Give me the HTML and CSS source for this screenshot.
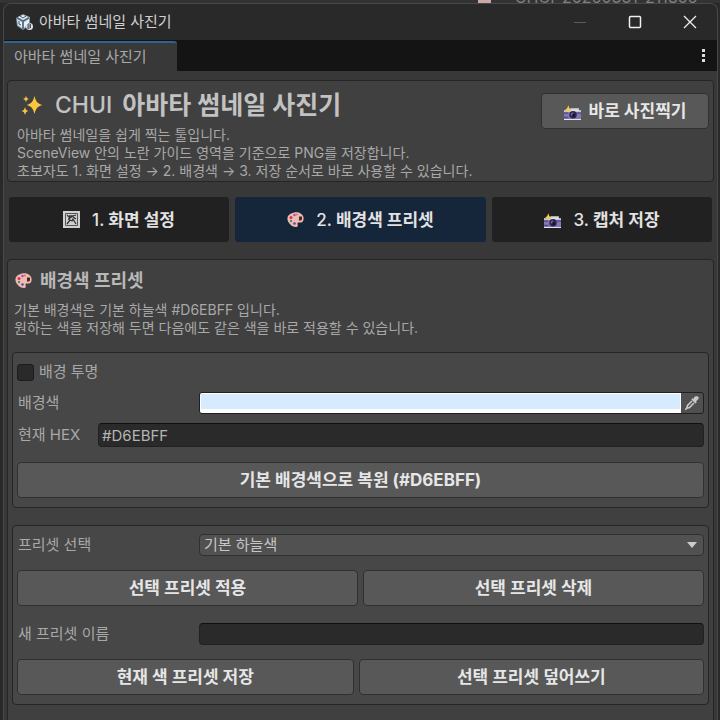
FILE: index.html
```html
<!DOCTYPE html>
<html lang="ko">
<head>
<meta charset="utf-8">
<title>아바타 썸네일 사진기</title>
<link rel="stylesheet" href="styles.css">
</head>
<body>
<svg class="defs" width="0" height="0" aria-hidden="true">
  <symbol id="camera" viewBox="0 0 16 16">
    <path fill="#d8d8e0" d="M6 5h8v2h2v2H0V7h6z"/>
    <path fill="#8078b4" d="M0 8h16v7H0z"/>
    <path fill="#e4e4ea" d="M0 7h16v1H0zM0 15h16v1H0z"/>
    <path fill="#544a8a" d="M0 9h4v1H0zM12 9h4v1h-4zM0 13h4v1H0z"/>
    <circle cx="8.500" cy="11" r="3.500" fill="#30254e"/>
    <circle cx="8" cy="10.500" r="1.500" fill="#6e62a4"/>
    <path fill="#120e22" d="M8 10h2v3H8z"/>
    <path fill="#f8cf48" d="M4 2l1 3 2 1-2 1-1 2-1-2-2-1 2-1z"/>
  </symbol>
  <symbol id="palette" viewBox="0 0 17 16">
    <path fill="#f3b9ad" d="M7 1C11 0 16 2 16.500 6c.5 3-1 5-3 5-1.500 0-3-.5-3 1 0 1 1 3-1 3.500C6 16 1 12 .5 8 0 4 3 2 7 1z"/>
    <path fill="#3c2d30" d="M12 5h3v3l-1 1h-2z"/>
    <circle cx="7.500" cy="3.500" r="1.200" fill="#7c55c8"/>
    <circle cx="4" cy="6" r="1.500" fill="#d82c62"/>
    <circle cx="4" cy="9.500" r="1.200" fill="#3b9c64"/>
    <circle cx="7.500" cy="12" r="1.300" fill="#464bd0"/>
    <circle cx="10" cy="3" r="1" fill="#dc6f72"/>
  </symbol>
</svg>
<div class="behind" aria-hidden="true"><i class="thumb"></i><span>CHUI_20260331_211856_</span></div>
<div class="window">
  <header class="titlebar">
    <svg class="app-icon" viewBox="0 0 18 18" aria-hidden="true">
      <path fill="#8299ac" d="M8 1l7 3v8l-7 5-6-4-1-8z"/>
      <path fill="#e6edf3" d="M8 2l5 2-5 3-5-3zM2 6l5 3v6l-4-3zM9 9l5-3v4l-5 5z"/>
      <path fill="none" stroke="#40566a" d="M2 5l6 3 6-3M8 8v8M5 3l3 2 3-2M4 8v3l2 1"/>
      <circle cx="14.500" cy="13.500" r="3.500" fill="#dce2e7"/>
      <path fill="none" stroke="#44525f" d="M13 16v-5h2l1 1-1 1h-2m2 0l1 1-1 1h-2"/>
    </svg>
    <h1 class="window-title">아바타 썸네일 사진기</h1>
    <button class="win-btn" aria-label="최소화" disabled><svg viewBox="0 0 14 14"><path d="M1 7.500h12" stroke="#5c5c5c"/></svg></button>
    <button class="win-btn" aria-label="최대화"><svg viewBox="0 0 14 14"><rect x="1.500" y="1.500" width="11" height="11" rx="1" stroke="#f0f0f0" stroke-width="1.500"/></svg></button>
    <button class="win-btn" aria-label="닫기"><svg viewBox="0 0 14 14"><path d="M1 1l12 12M13 1L1 13" stroke="#f0f0f0" stroke-width="1.300"/></svg></button>
  </header>
  <div class="dock">
    <a class="dock-tab" href="#main">아바타 썸네일 사진기</a>
    <button class="more" aria-label="메뉴"><svg viewBox="0 0 3 13"><path fill="#ddd" d="M0 0h3v3H0zM0 5h3v3H0zM0 10h3v3H0z"/></svg></button>
  </div>
  <main class="content" id="main">
    <section class="intro">
      <div class="intro-text">
        <h2 class="intro-title"><svg class="sparkle" viewBox="0 0 22 22" aria-hidden="true"><path fill="#fbc63f" d="M13.500 2c1.500 6 3 7.500 8 9-5 1.500-6.500 3-8 9-1.500-6-3-7.500-8-9 5-1.500 6.500-3 8-9zM5 1.500c.5 2.500 1 3 3 3.500-2 .5-2.500 1-3 3.500C4.500 6 4 5.500 2 5c2-.5 2.500-1 3-3.500zM4 13c.6 2.500 1.200 3.200 3.500 4-2.300.8-2.900 1.500-3.500 4-.6-2.500-1.200-3.200-3.500-4 2.300-.8 2.900-1.500 3.500-4z"/></svg><span class="latin">CHUI</span> 아바타 썸네일 사진기</h2>
        <p class="desc">아바타 썸네일을 쉽게 찍는 툴입니다.<br>SceneView 안의 노란 가이드 영역을 기준으로 PNG를 저장합니다.<br>초보자도 1. 화면 설정 → 2. 배경색 → 3. 저장 순서로 바로 사용할 수 있습니다.</p>
      </div>
      <button class="btn shoot"><svg class="emoji" aria-hidden="true"><use href="#camera"/></svg>바로 사진찍기</button>
    </section>
    <nav class="steps">
      <button class="step"><svg class="emoji" viewBox="0 0 17 17" aria-hidden="true"><path fill="#d0d0d0" d="M0 0h17v17H0z"/><path fill="none" stroke="#555" d="M2.500 2.500h12v12h-12z"/><path fill="none" stroke="#333" stroke-width="1.300" d="M4 4l3 3 3-2 3-1M4 13l3-4 2 1 1-2 3 5M6 5h4M5 8h2M10 6l3 2"/></svg><span class="step-label"><span class="latin">1.</span> 화면 설정</span></button>
      <button class="step active"><svg class="emoji" aria-hidden="true"><use href="#palette"/></svg><span class="step-label"><span class="latin">2.</span> 배경색 프리셋</span></button>
      <button class="step"><svg class="emoji" aria-hidden="true"><use href="#camera"/></svg><span class="step-label"><span class="latin">3.</span> 캡처 저장</span></button>
    </nav>
    <section class="panel">
      <h2 class="panel-title"><svg class="emoji" aria-hidden="true"><use href="#palette"/></svg>배경색 프리셋</h2>
      <p class="desc">기본 배경색은 기본 하늘색 #D6EBFF 입니다.<br>원하는 색을 저장해 두면 다음에도 같은 색을 바로 적용할 수 있습니다.</p>
      <div class="group">
        <div class="row"><input class="check" type="checkbox" id="transparent"><label for="transparent">배경 투명</label></div>
        <div class="row">
          <label class="name" for="color">배경색</label>
          <div class="color-field"><input type="color" id="color" value="#d6ebff"><button class="dropper" aria-label="색 추출"><svg viewBox="0 0 14 14"><path fill="#c8c8c8" d="M9 1.500C10.500-.5 13 0 13.500 1s0 2.500-1.500 3.500l-1 1 .8.9-1.300 1.200L6.300 3.500l1.200-1.200.9.700z"/><path fill="none" stroke="#c8c8c8" stroke-width="1.600" d="M7 5L2.500 9.500 1.800 12.200l2.700-.7L9 7"/><path stroke="#c8c8c8" stroke-width="1.500" d="M0 14l2.500-2.500"/></svg></button></div>
        </div>
        <div class="row hex-row"><label class="short" for="hex">현재 HEX</label><input class="text hex" type="text" id="hex" value="#D6EBFF"></div>
        <div class="actions"><button class="btn">기본 배경색으로 복원 (#D6EBFF)</button></div>
      </div>
      <div class="group">
        <div class="row"><label class="name" for="preset">프리셋 선택</label>
          <div class="select-wrap"><select id="preset"><option>기본 하늘색</option></select><svg class="arrow" viewBox="0 0 10 6" aria-hidden="true"><path fill="#ccc" d="M0 0h10L5 6z"/></svg></div>
        </div>
        <div class="actions"><button class="btn">선택 프리셋 적용</button><button class="btn">선택 프리셋 삭제</button></div>
        <div class="row name-row"><label class="name" for="new-name">새 프리셋 이름</label><input class="text" type="text" id="new-name"></div>
        <div class="actions save"><button class="btn">현재 색 프리셋 저장</button><button class="btn">선택 프리셋 덮어쓰기</button></div>
      </div>
    </section>
  </main>
</div>
</body>
</html>
```
FILE: styles.css
```css
* { box-sizing: border-box; }
body {
  margin: 0;
  height: 100vh;
  overflow: hidden;
  display: flex;
  flex-direction: column;
  background: #292929;
  color: #a8a8a8;
  font: 15px/20px Inter, "Noto Sans CJK KR", sans-serif;
}
h1, h2, p { margin: 0; font-weight: 400; }
button, input, select { margin: 0; padding: 0; font: inherit; color: inherit; }
button { border: 0; background: none; }
svg { display: block; fill: none; }
.defs { position: absolute; }
.behind {
  flex: none;
  height: 3px;
  display: flex;
  align-items: flex-end;
  justify-content: flex-end;
  gap: 24px;
  padding-right: 16px;
  overflow: hidden;
  background: #333;
  color: #808080;
  font-size: 16px;
}
.behind span { line-height: 12px; }
.thumb { width: 13px; height: 3px; background: #c9aaa4; }
.window {
  flex: 1;
  min-height: 0;
  display: flex;
  flex-direction: column;
  margin: 0 2px 0 3px;
  border: 1px solid #484848;
  border-bottom: 0;
  border-radius: 8px 8px 0 0;
  overflow: hidden;
  background: #383838;
}
.titlebar { flex: none; display: flex; align-items: center; height: 36px; padding-left: 11px; background: #292929; }
.app-icon { width: 18px; height: 18px; margin-right: 6px; }
.window-title { flex: 1; font-size: 15px; line-height: 20px; color: #d0d0d0; }
.win-btn { width: 55px; height: 34px; display: grid; place-items: center; }
.win-btn svg { width: 14px; height: 14px; }
.dock { flex: none; display: flex; justify-content: space-between; height: 31px; background: #141414; }
.dock-tab {
  display: flex;
  align-items: center;
  margin-top: 1px;
  padding: 0 30px 0 10px;
  border-top: 2px solid #2f638f;
  border-radius: 0 3px 0 0;
  background: #383838;
  color: #a8a8a8;
  text-decoration: none;
}
.more { width: 28px; display: grid; place-items: center; }
.more svg { width: 3px; height: 13px; }
.content { flex: 1; min-height: 0; overflow-y: auto; scrollbar-width: none; padding: 9px 3px 0; }
.intro, .panel, .group { border: 1px solid #252525; border-radius: 4px; }
.intro { display: flex; align-items: flex-start; justify-content: space-between; padding: 8px 4px 1px 9px; background: #404040; }
.intro-title { display: flex; align-items: center; gap: 10px; height: 32px; margin-bottom: 5px; font-size: 25px; font-weight: 700; color: #c2c2c2; }
.sparkle { width: 22px; height: 22px; margin: 0 2px 0 4px; }
.latin { font-weight: 500; }
.intro-title .latin { font-size: 23px; }
.desc { font-size: 14px; line-height: 18px; }
.btn {
  height: 36px;
  border: 1px solid #303030;
  border-radius: 4px;
  background: #585858;
  color: #e6e6e6;
  font-size: 17px;
  font-weight: 700;
  white-space: nowrap;
}
.shoot { display: flex; align-items: center; justify-content: center; gap: 8px; width: 168px; margin-top: 4px; }
.emoji { flex: none; width: 17px; height: 17px; }
.steps { display: flex; gap: 6px; margin: 15px 2px 17px; }
.step {
  flex: 220;
  height: 45px;
  display: flex;
  align-items: center;
  justify-content: center;
  gap: 12px;
  border-radius: 3px;
  background: #212121;
  color: #e2e2e2;
  font-size: 17px;
  font-weight: 700;
}
.step.active { flex: 251; background: #15253a; }
.panel { min-height: 500px; padding: 4px; background: #404040; }
.panel-title { display: flex; align-items: center; gap: 8px; height: 33px; padding-left: 3px; margin-bottom: 4px; font-size: 18px; font-weight: 700; color: #b8b8b8; }
.panel > .desc { padding-left: 2px; margin-bottom: 15px; }
.group { padding: 8px 4px 9px; margin-bottom: 17px; background: #474747; }
.row { display: flex; align-items: center; min-height: 22px; margin-bottom: 9px; }
.row label { padding-left: 1px; }
.row .name { width: 182px; flex: none; }
.row .short { width: 81px; flex: none; }
.check { appearance: none; width: 17px; height: 17px; margin-right: 4px; border: 1px solid #1c1c1c; border-radius: 3px; background: #2a2a2a; }
.color-field { flex: 1; display: flex; height: 22px; border: 1px solid #202020; border-radius: 3px; background: #505050; overflow: hidden; }
.color-field input { flex: 1; min-width: 0; height: 20px; border: 0; appearance: none; background: #fff; }
.color-field input::-webkit-color-swatch-wrapper { padding: 1px 1px 4px; background: #fff; }
.color-field input::-webkit-color-swatch { border: 0; border-radius: 0; }
.dropper { width: 22px; display: grid; place-items: center; }
.dropper svg { width: 14px; height: 14px; }
.text { flex: 1; min-width: 0; height: 22px; padding: 0 3px; border: 1px solid #212121; border-top-color: #101010; border-radius: 4px; background: #2a2a2a; color: #b4b4b4; }
.hex { height: 24px; }
.hex-row { margin-bottom: 15px; }
.actions { display: flex; gap: 5px; }
.actions .btn { flex: 340; }
.save .btn:last-child { flex: 349; }
.select-wrap { flex: 1; display: grid; align-items: center; height: 22px; }
.select-wrap > * { grid-area: 1 / 1; }
.select-wrap select { width: 100%; height: 22px; padding: 0 4px; appearance: none; border: 1px solid #303030; border-radius: 4px; background: #515151; color: #c6c6c6; }
.arrow { justify-self: end; width: 10px; height: 6px; margin-right: 7px; pointer-events: none; }
.group:last-child .row { margin-bottom: 14px; }
.group .actions + .name-row { margin: 17px 0 14px; }
```
